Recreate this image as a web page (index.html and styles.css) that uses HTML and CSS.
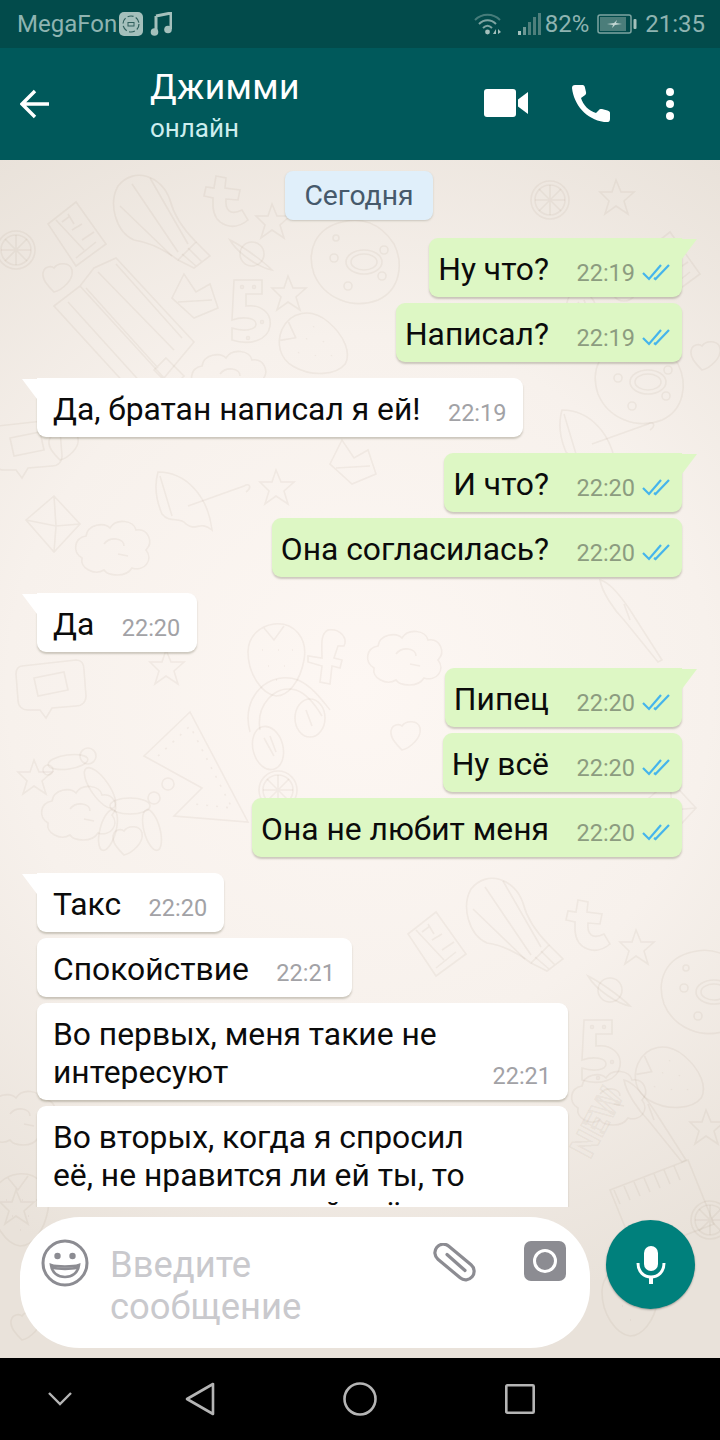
FILE: index.html
```html
<!DOCTYPE html>
<html lang="ru">
<head>
  <meta charset="UTF-8" />
  <meta name="viewport" content="width=device-width, initial-scale=1.0"/>
  <title>Джимми</title>
  <link rel="stylesheet" href="styles.css">
</head>
<body>
  <div class="phone">

    <div class="statusbar">
      <div class="status-left">
        <span>MegaFon</span>
        <svg class="status-app" width="24" height="24" viewBox="0 0 24 24">
          <rect width="24" height="24" rx="5" fill="#a4c0bc"/>
          <circle cx="12" cy="12" r="8" fill="none" stroke="#2f5f5c" stroke-width="1.2" stroke-dasharray="6 2.5"/>
          <rect x="9" y="10.5" width="6" height="3.5" fill="none" stroke="#2f5f5c"/>
        </svg>
        <svg class="status-note" width="22" height="24" viewBox="0 0 22 24">
          <path d="M6 4 L21 1 V17 M6 4 V20" fill="none" stroke="#a4c0bc" stroke-width="3"/>
          <circle cx="4.5" cy="20" r="3.8" fill="#a4c0bc"/>
          <circle cx="18" cy="17.5" r="3.8" fill="#a4c0bc"/>
        </svg>
      </div>
      <div class="status-right">
        <svg class="status-wifi" width="28" height="24" viewBox="0 0 28 24">
          <g fill="none" stroke="#7fa5a2" stroke-width="2">
            <path d="M1 8 C8 1 19 1 26 8" opacity=".55"/>
            <path d="M5 12 C10 7 17 7 22 12"/>
            <path d="M9 16 C12 13 15 13 18 16"/>
          </g>
          <circle cx="13.5" cy="20" r="2.4" fill="#a4c0bc"/>
          <path d="M19 22 L22 17 V22 Z M24 17 L27 20 L24 22 Z" fill="#a4c0bc"/>
        </svg>
        <svg class="status-signal" width="23" height="23" viewBox="0 0 23 23">
          <rect x="0" y="18" width="3" height="4" fill="#a4c0bc"/>
          <rect x="5" y="14" width="3" height="8" fill="#6d9794"/>
          <rect x="10" y="9" width="3" height="13" fill="#4f7f7c"/>
          <rect x="15" y="4" width="3" height="18" fill="#4f7f7c"/>
          <rect x="20" y="0" width="3" height="22" fill="#4f7f7c"/>
        </svg>
        <span class="status-pct">82%</span>
        <svg class="status-batt" width="40" height="20" viewBox="0 0 40 20">
          <rect x="1" y="1" width="33" height="18" rx="2" fill="none" stroke="#7fa5a2" stroke-width="1.5"/>
          <rect x="3" y="3" width="26" height="14" fill="#4b7d7a"/>
          <rect x="36.5" y="5" width="3" height="10" rx="1" fill="#a4c0bc"/>
          <path d="M10 10 L17 9 L20 6 L19 9 L25 10 L18 11 L15 14 L16 11 Z" fill="#c3d6d3"/>
        </svg>
        <span class="status-time">21:35</span>
      </div>
    </div>

    <header class="topbar">
      <svg class="back" width="30" height="30" viewBox="0 0 30 30">
        <path d="M29 15 H3 M15 2 L2 15 L15 28" fill="none" stroke="#fff" stroke-width="3.4"/>
      </svg>
      <div class="contact">
        <div class="contact-name">Джимми</div>
        <div class="contact-state">онлайн</div>
      </div>
      <svg class="ic-video" width="44" height="28" viewBox="0 0 44 28">
        <rect x="0" y="0" width="32" height="28" rx="3" fill="#fff"/>
        <path d="M34 10.5 L44 3 V25 L34 17.5 Z" fill="#fff"/>
      </svg>
      <svg class="ic-call" width="38" height="37" viewBox="0 0 38 37">
        <path d="M3 0 C1 0 0 1 0 3 C2 20 14 34 32 37 L36 37 C37 37 38 36 38 34 V28 C38 26.500 37 26 35.500 25.500 L30 24 C28.500 23.800 27.500 24.200 26.500 25.500 L24 28 C17 26 11 20 9 13 L12.500 10.500 C14 9.500 14.300 8.500 14 7 L12.800 2 C12.500 0.500 11.500 0 10 0 Z" fill="#fff"/>
      </svg>
      <div class="ic-more"><i></i><i></i><i></i></div>
    </header>

    <main class="chat">
      <svg class="wallpaper" width="720" height="1198" viewBox="0 0 720 1198">
        <defs>
          <g id="d-bulb">
            <path d="M6 14 C22 -6 50 4 58 28 C62 44 70 56 84 70 L66 88 C50 76 36 70 22 68 C4 60 -4 32 6 14 Z"/>
            <path d="M20 12 L66 80 M38 6 L76 72 M8 34 L60 84"/>
            <path d="M84 70 L98 84 L82 96 L66 88 M76 76 L90 90 M70 82 L84 94"/>
          </g>
          <g id="d-book">
            <path d="M2 24 L30 2 L60 44 L30 66 Z M10 20 L38 50 M30 66 L60 44"/>
            <path d="M16 22 L24 16 M26 30 L36 24 M22 14 L28 24 M36 40 L48 32 M30 58 L50 42"/>
          </g>
          <g id="d-orange">
            <circle cx="20" cy="20" r="19"/><circle cx="20" cy="20" r="15"/>
            <path d="M20 5 V35 M5 20 H35 M9 9 L31 31 M31 9 L9 31"/>
          </g>
          <g id="d-tletter">
            <path d="M12 0 L22 2 L21 12 L36 14 L34 24 L22 23 C21 34 26 40 38 34 L44 44 C30 56 10 50 9 30 L9 22 L0 20 L2 11 L10 12 Z"/>
          </g>
          <g id="d-star">
            <path d="M16 0 L21 12 L34 12 L24 21 L28 34 L16 26 L5 34 L9 21 L0 12 L12 12 Z"/>
          </g>
          <g id="d-planet">
            <circle cx="22" cy="20" r="12"/>
            <path d="M0 6 C12 12 32 26 42 36 C30 34 8 20 0 6 Z"/>
          </g>
          <g id="d-moon">
            <path d="M36 2 C10 8 0 30 8 54 C18 78 46 90 72 80 C94 70 98 44 88 24 C74 2 54 -3 36 2 Z"/>
            <ellipse cx="58" cy="42" rx="18" ry="12"/><ellipse cx="58" cy="42" rx="13" ry="8"/>
            <circle cx="28" cy="38" r="4"/><circle cx="78" cy="30" r="4"/><circle cx="76" cy="56" r="4"/><circle cx="42" cy="66" r="4"/><circle cx="30" cy="18" r="3"/>
          </g>
          <g id="d-five">
            <path d="M4 0 H32 V14 H16 V26 C32 24 42 34 40 46 C38 60 20 66 2 60 L2 48 C14 52 26 50 26 44 C26 38 14 36 2 40 Z"/>
            <circle cx="12" cy="7" r="1.500"/><circle cx="24" cy="7" r="1.500"/><circle cx="32" cy="42" r="1.500"/><circle cx="18" cy="58" r="1.500"/>
          </g>
          <g id="d-crown">
            <path d="M0 24 L12 0 L24 18 L38 10 L46 34 L22 44 Z M6 28 L40 26"/>
          </g>
          <g id="d-cake">
            <path d="M0 48 L26 28 L110 120 L84 140 Z M26 28 L40 10 L62 0 L140 84 L110 120"/>
            <path d="M14 44 L90 128 M32 30 L104 110 M44 14 L120 92 M62 6 L128 80 M112 100 L130 118 L118 130 L100 112 Z"/>
          </g>
          <g id="d-strawberry">
            <path d="M28 4 C48 2 62 18 58 40 C54 62 42 76 30 76 C16 74 2 54 2 32 C2 16 14 6 28 4 Z"/>
            <path d="M18 8 L28 20 L38 6 M16 30 h1 M32 30 h1 M46 30 h1 M22 46 h1 M38 46 h1 M30 60 h1"/>
          </g>
          <g id="d-cloud">
            <path d="M12 16 C14 4 30 2 36 8 C42 -2 60 0 62 10 C74 8 80 22 72 30 C80 40 70 52 58 48 C52 58 34 56 30 50 C20 56 6 48 8 38 C-2 32 0 18 12 16 Z"/>
            <path d="M30 24 C36 16 50 18 50 26 M44 34 L54 36"/>
          </g>
          <g id="d-mail">
            <path d="M2 24 L30 0 L56 28 L30 56 Z M2 24 L32 30 L56 28 M30 0 L32 30 L30 56"/>
          </g>
          <g id="d-umbrella">
            <path d="M2 0 C30 0 52 24 56 58 C44 48 40 60 30 52 C24 44 14 52 6 42 C0 28 -2 14 2 0 Z"/>
            <path d="M32 34 L88 14 C94 10 96 16 90 20 M16 44 L4 4"/>
          </g>
          <g id="d-heart">
            <path d="M12 6 C16 0 28 0 30 8 C32 18 20 28 12 30 C6 24 -2 16 2 8 C4 4 10 4 12 6 Z"/>
          </g>
          <g id="d-dog">
            <ellipse cx="26" cy="12" rx="20" ry="7" transform="rotate(-8 26 12)"/><circle cx="46" cy="6" r="8"/><circle cx="6" cy="20" r="5"/>
            <ellipse cx="58" cy="38" rx="9" ry="24" transform="rotate(-35 58 38)"/>
            <ellipse cx="88" cy="56" rx="20" ry="8"/>
            <ellipse cx="66" cy="80" rx="8" ry="21" transform="rotate(15 66 80)"/><ellipse cx="110" cy="80" rx="8" ry="21" transform="rotate(-15 110 80)"/>
            <circle cx="112" cy="48" r="6"/><circle cx="126" cy="34" r="6"/>
          </g>
          <g id="d-ruler">
            <path d="M0 44 L46 0 L104 110 L30 104 L58 76 Z"/>
            <path d="M14 44 L46 14 L88 96 L50 92" stroke-dasharray="2 8"/>
          </g>
          <g id="d-phones">
            <path d="M4 56 C-6 20 24 -6 52 4 C66 10 76 24 84 34 M14 54 C10 30 28 8 50 14 C62 18 70 30 76 40"/>
            <ellipse cx="22" cy="72" rx="15" ry="22" transform="rotate(-15 22 72)"/>
            <ellipse cx="64" cy="42" rx="15" ry="19"/>
            <path d="M18 62 L28 80 M24 60 L30 76 M60 34 L66 50"/>
          </g>
          <g id="d-fletter">
            <path d="M22 0 C34 -2 42 8 38 16 L32 16 L28 28 L36 30 L34 38 L26 36 L24 54 L14 52 L16 36 L2 32 L2 26 L16 28 C16 16 14 4 22 0 Z"/>
          </g>
          <g id="d-knife">
            <path d="M0 0 C10 2 22 18 30 30 L62 80 L58 82 L24 40 C14 30 2 12 0 0 Z M24 24 L30 40"/>
          </g>
          <g id="d-chat">
            <path d="M8 6 L62 0 C68 0 70 4 70 10 L72 36 C72 42 68 46 62 46 L38 48 L32 58 L26 50 L14 50 C8 50 4 46 4 40 L2 14 C2 10 4 6 8 6 Z"/>
            <path d="M20 18 L50 12 L54 30 L24 36 Z"/>
          </g>
          <g id="d-pad">
            <path d="M0 30 L78 0 L104 64 L26 94 Z"/>
            <path d="M4 30 L10 44 M14 26 L20 40 M24 22 L30 36 M34 18 L40 32 M44 14 L50 28 M54 10 L60 24 M64 6 L70 20"/>
          </g>
        </defs>
        <g class="doodles">
          <use href="#d-orange" x="-4" y="70"/>
          <use href="#d-book" x="46" y="40"/>
          <use href="#d-bulb" x="112" y="12"/>
          <use href="#d-tletter" x="204" y="16"/>
          <use href="#d-star" x="256" y="44"/>
          <use href="#d-planet" x="230" y="74"/>
          <use href="#d-moon" x="306" y="60"/>
          <use href="#d-cake" x="54" y="98"/>
          <use href="#d-crown" x="172" y="114"/>
          <use href="#d-five" x="230" y="120"/>
          <use href="#d-star" x="272" y="116"/>
          <use href="#d-strawberry" x="284" y="146" transform="rotate(-60 314 186)"/>
          <use href="#d-heart" x="42" y="102"/>
          <use href="#d-cloud" x="190" y="190"/>
          <use href="#d-orange" x="530" y="20"/>
          <use href="#d-book" x="640" y="70"/>
          <use href="#d-heart" x="690" y="180"/>
          <use href="#d-phones" x="560" y="80"/>
          <use href="#d-star" x="600" y="20"/>
          <use href="#d-chat" x="-10" y="260"/>
          <use href="#d-heart" x="48" y="270"/>
          <use href="#d-mail" x="24" y="336"/>
          <use href="#d-cloud" x="74" y="360"/>
          <use href="#d-umbrella" x="156" y="312"/>
          <use href="#d-strawberry" x="246" y="460"/>
          <use href="#d-star" x="260" y="310"/>
          <use href="#d-crown" x="330" y="280"/>
          <use href="#d-phones" x="246" y="516"/>
          <use href="#d-fletter" x="306" y="470"/>
          <use href="#d-cloud" x="366" y="470"/>
          <use href="#d-heart" x="390" y="560"/>
          <use href="#d-orange" x="258" y="610"/>
          <use href="#d-chat" x="14" y="500"/>
          <use href="#d-star" x="150" y="490"/>
          <use href="#d-star" x="18" y="600"/>
          <use href="#d-dog" x="42" y="590"/>
          <use href="#d-ruler" x="144" y="552"/>
          <use href="#d-cloud" x="40" y="625"/>
          <use href="#d-heart" x="112" y="665"/>
          <use href="#d-knife" x="600" y="420"/>
          <use href="#d-moon" x="590" y="180"/>
          <use href="#d-umbrella" x="560" y="250"/>
          <use href="#d-mail" x="640" y="620"/>
          <use href="#d-bulb" x="465" y="715"/>
          <use href="#d-book" x="406" y="750"/>
          <use href="#d-tletter" x="566" y="740"/>
          <use href="#d-star" x="620" y="770"/>
          <use href="#d-planet" x="588" y="810"/>
          <use href="#d-moon" x="656" y="790"/>
          <use href="#d-five" x="580" y="860"/>
          <use href="#d-strawberry" x="640" y="880" transform="rotate(-60 670 920)"/>
          <use href="#d-knife" x="624" y="920"/>
          <use href="#d-cloud" x="570" y="910"/>
          <use href="#d-star" x="690" y="950"/>
          <use href="#d-pad" x="610" y="1000"/>
          <use href="#d-cloud" x="-20" y="930"/>
          <use href="#d-strawberry" x="-10" y="1010"/>
          <use href="#d-strawberry" x="600" y="1100"/>
          <use href="#d-orange" x="690" y="1040"/>
          <use href="#d-heart" x="10" y="1150"/>
          <use href="#d-star" x="0" y="1030"/>
          <text class="doodle-word" transform="translate(590 1000) rotate(-62)">NEW</text>
        </g>
      </svg>

      <div class="messages">
        <div class="day-row"><span class="day">Сегодня</span></div>

        <div class="bubble out first">
          <span class="text">Ну что?</span>
          <span class="meta"><span class="time">22:19</span><svg class="ticks" width="29" height="18" viewBox="0 0 29 18"><use href="#ticks-path"/></svg></span>
        </div>
        <div class="bubble out">
          <span class="text">Написал?</span>
          <span class="meta"><span class="time">22:19</span><svg class="ticks" width="29" height="18" viewBox="0 0 29 18"><use href="#ticks-path"/></svg></span>
        </div>

        <div class="bubble in first">
          <span class="text">Да, братан написал я ей!</span>
          <span class="meta"><span class="time">22:19</span></span>
        </div>

        <div class="bubble out first">
          <span class="text">И что?</span>
          <span class="meta"><span class="time">22:20</span><svg class="ticks" width="29" height="18" viewBox="0 0 29 18"><use href="#ticks-path"/></svg></span>
        </div>
        <div class="bubble out">
          <span class="text">Она согласилась?</span>
          <span class="meta"><span class="time">22:20</span><svg class="ticks" width="29" height="18" viewBox="0 0 29 18"><use href="#ticks-path"/></svg></span>
        </div>

        <div class="bubble in first">
          <span class="text">Да</span>
          <span class="meta"><span class="time">22:20</span></span>
        </div>

        <div class="bubble out first">
          <span class="text">Пипец</span>
          <span class="meta"><span class="time">22:20</span><svg class="ticks" width="29" height="18" viewBox="0 0 29 18"><use href="#ticks-path"/></svg></span>
        </div>
        <div class="bubble out">
          <span class="text">Ну всё</span>
          <span class="meta"><span class="time">22:20</span><svg class="ticks" width="29" height="18" viewBox="0 0 29 18"><use href="#ticks-path"/></svg></span>
        </div>
        <div class="bubble out">
          <span class="text">Она не любит меня</span>
          <span class="meta"><span class="time">22:20</span><svg class="ticks" width="29" height="18" viewBox="0 0 29 18"><use href="#ticks-path"/></svg></span>
        </div>

        <div class="bubble in first">
          <span class="text">Такс</span>
          <span class="meta"><span class="time">22:20</span></span>
        </div>
        <div class="bubble in">
          <span class="text">Спокойствие</span>
          <span class="meta"><span class="time">22:21</span></span>
        </div>
        <div class="bubble in wide">
          <span class="text">Во первых, меня такие не<br>интересуют</span>
          <span class="meta"><span class="time">22:21</span></span>
        </div>
        <div class="bubble in wide">
          <span class="text">Во вторых, когда я спросил<br>её, не нравится ли ей ты, то<br>она сказала, что ей всё равно</span>
        </div>
      </div>

      <div class="composer">
        <div class="input-pill">
          <svg class="ic-emoji" width="48" height="48" viewBox="0 0 48 48">
            <circle cx="24" cy="24" r="22" fill="none" stroke="#8c8c92" stroke-width="3"/>
            <circle cx="16.500" cy="17" r="3.200" fill="#8c8c92"/>
            <circle cx="31.500" cy="17" r="3.200" fill="#8c8c92"/>
            <path d="M10 26 C16 28 32 28 38 26 C37 34 31 38 24 38 C17 38 11 34 10 26 Z" fill="none" stroke="#8c8c92" stroke-width="2.600"/>
            <path d="M11 27 C16 29 32 29 37 27 L36.500 30 C30 31.500 18 31.500 11.500 30 Z" fill="#8c8c92"/>
          </svg>
          <div class="placeholder">Введите<br>сообщение</div>
          <svg class="ic-clip" width="44" height="40" viewBox="0 0 44 40">
            <rect x="-1.500" y="10.500" width="46" height="17" rx="8.500" transform="rotate(40 21.500 19)" fill="none" stroke="#8c8c92" stroke-width="3.200"/>
            <path d="M14 11.500 L32 27.500" fill="none" stroke="#8c8c92" stroke-width="3.200" stroke-linecap="round"/>
          </svg>
          <svg class="ic-camera" width="42" height="40" viewBox="0 0 42 40">
            <rect width="42" height="40" rx="7" fill="#8c8c92"/>
            <circle cx="21" cy="20" r="10.500" fill="#8c8c92" stroke="#fff" stroke-width="3"/>
          </svg>
        </div>
        <div class="mic">
          <svg width="30" height="38" viewBox="0 0 30 38">
            <rect x="8" y="0" width="14" height="25" rx="7" fill="#fff"/>
            <path d="M2 17 C2 26 8 31 15 31 C22 31 28 26 28 17" fill="none" stroke="#fff" stroke-width="3"/>
            <rect x="13" y="30" width="4" height="8" fill="#fff"/>
          </svg>
        </div>
      </div>
    </main>

    <nav class="navbar">
      <svg width="26" height="16" viewBox="0 0 26 16"><path d="M2 2 L13 13 L24 2" fill="none" stroke="#b5b5b5" stroke-width="2.400"/></svg>
      <svg width="30" height="34" viewBox="0 0 30 34"><path d="M28 2 V32 L2 17 Z" fill="none" stroke="#b5b5b5" stroke-width="2.600" stroke-linejoin="round"/></svg>
      <svg width="34" height="34" viewBox="0 0 34 34"><circle cx="17" cy="17" r="15.500" fill="none" stroke="#b5b5b5" stroke-width="2.600"/></svg>
      <svg width="30" height="30" viewBox="0 0 30 30"><rect x="1.300" y="1.300" width="27.400" height="27.400" rx="1" fill="none" stroke="#b5b5b5" stroke-width="2.600"/></svg>
    </nav>

    <svg class="sprite" width="0" height="0">
      <g id="ticks-path" fill="none" stroke="#45b4ec" stroke-width="2.200">
        <path d="M1 9 L7 15 L19 1"/>
        <path d="M12 14 L13.500 15 L27 1"/>
      </g>
    </svg>
  </div>
</body>
</html>
```

FILE: styles.css
```css
*, *::before, *::after {
  box-sizing: border-box;
}

* {
  margin: 0;
}

body {
  width: 720px;
  height: 1440px;
  overflow: hidden;
  font-family: 'Roboto', sans-serif;
  -webkit-font-smoothing: antialiased;
}

svg {
  display: block;
  flex: none;
}

.phone {
  width: 720px;
  height: 1440px;
  display: flex;
  flex-direction: column;
  background: #000;
}

.sprite {
  position: absolute;
}

/* status bar */
.statusbar {
  height: 48px;
  padding: 0 15px 0 17px;
  display: flex;
  align-items: center;
  justify-content: space-between;
  background: #024b4b;
  color: #8fb4b1;
  font-size: 24px;
}

.status-left,
.status-right {
  display: flex;
  align-items: center;
}

.status-app {
  margin-left: 2px;
}

.status-note {
  margin-left: 7px;
}

.status-signal {
  margin-left: 16px;
}

.status-pct {
  margin-left: 4px;
}

.status-batt {
  margin-left: 8px;
}

.status-time {
  margin-left: 8px;
}

/* header */
.topbar {
  height: 112px;
  padding: 0 46px 0 20px;
  display: flex;
  align-items: center;
  background: #00595b;
  color: #fff;
}

.back {
  margin-right: 100px;
}

.contact {
  flex: 1;
  margin-top: 4px;
}

.contact-name {
  font-size: 35.5px;
  line-height: 44px;
  letter-spacing: .4px;
}

.contact-state {
  font-size: 26px;
  line-height: 38px;
  color: #cdeeee;
}

.ic-video {
  margin-right: 44px;
  margin-top: -2px;
}

.ic-call {
  margin-right: 56px;
  margin-top: -2px;
}

.ic-more {
  display: flex;
  flex-direction: column;
  gap: 4px;
}

.ic-more i {
  display: block;
  width: 8px;
  height: 8px;
  border-radius: 50%;
  background: #fff;
}

/* chat */
.chat {
  position: relative;
  flex: 1;
  display: flex;
  flex-direction: column;
  min-height: 0;
  background: radial-gradient(ellipse 640px 640px at 50% 44%, #fdf7f3 0%, #f7f1ec 55%, #e9e2da 100%);
}

.wallpaper {
  position: absolute;
  top: 0;
  left: 0;
}

.doodles {
  fill: none;
  stroke: #8a7558;
  stroke-opacity: .08;
  stroke-width: 1.6;
}

.doodle-word {
  font-family: 'Roboto', sans-serif;
  font-size: 34px;
  font-weight: 700;
}

.messages {
  position: relative;
  height: 1047px;
  padding: 11px 38px 0 37px;
  overflow: hidden;
  display: flex;
  flex-direction: column;
  gap: 6px;
}

.day-row {
  display: flex;
  justify-content: center;
  padding-right: 1px;
  margin-bottom: 12px;
}

.day {
  width: 148px;
  height: 49px;
  display: flex;
  align-items: center;
  justify-content: center;
  background: #e0effa;
  border-radius: 8px;
  box-shadow: 0 1px 2px rgba(90, 90, 70, .25);
  color: #46596b;
  font-size: 28.3px;
}

.bubble {
  position: relative;
  flex: none;
  display: flex;
  align-items: flex-end;
  padding: 12px 11px 9px 9px;
  border-radius: 9px;
  box-shadow: 0 2px 2px rgba(90, 85, 60, .28);
  color: #0b0b0b;
  font-size: 31.8px;
  line-height: 38px;
}

.out {
  align-self: flex-end;
  background: #ddf7c4;
}

.in {
  align-self: flex-start;
  background: #fff;
  padding-left: 16px;
  padding-right: 17px;
}

.bubble.first {
  margin-top: 10px;
}

.messages .day-row + .bubble.first {
  margin-top: 0;
}

.out.first {
  border-top-right-radius: 0;
}

.in.first {
  border-top-left-radius: 0;
}

.first::after {
  content: "";
  position: absolute;
  top: 1px;
  width: 15px;
  height: 20px;
}

.out.first::after {
  right: -15px;
  background: #ddf7c4;
  clip-path: polygon(0 -5%, 100% 0, 0 100%);
}

.in.first::after {
  left: -15px;
  background: #fff;
  clip-path: polygon(0 0, 100% -5%, 100% 100%);
}

.wide {
  width: 531px;
  justify-content: space-between;
}

.meta {
  display: flex;
  align-items: center;
  margin-left: 27.5px;
  height: 30px;
}

.time {
  font-size: 23.5px;
  line-height: 30px;
  color: #8c9c80;
}

.in .time {
  color: #a2a2a6;
}

.ticks {
  margin-left: 7px;
}

/* composer */
.composer {
  position: relative;
  padding: 10px 25px 0 20px;
  display: flex;
  align-items: flex-start;
  justify-content: space-between;
}

.input-pill {
  width: 570px;
  height: 131px;
  padding: 22px 24px 0 21px;
  display: flex;
  align-items: flex-start;
  background: #fff;
  border-radius: 60px;
}

.placeholder {
  flex: 1;
  margin-left: 21px;
  font-size: 36.4px;
  line-height: 42px;
  margin-top: 5px;
  color: #c9c9cd;
}

.ic-clip {
  margin-right: 47px;
  margin-top: 4px;
}

.ic-camera {
  margin-top: 2px;
}

.mic {
  width: 89px;
  height: 89px;
  margin-top: 3px;
  display: flex;
  align-items: center;
  justify-content: center;
  background: #00807c;
  border-radius: 50%;
  box-shadow: 0 1px 2px rgba(0, 0, 0, .3);
}

/* bottom nav */
.navbar {
  height: 82px;
  flex: none;
  display: grid;
  grid-template-columns: 120px 160px 160px 160px;
  align-items: center;
  justify-items: center;
  background: #000;
}
```
